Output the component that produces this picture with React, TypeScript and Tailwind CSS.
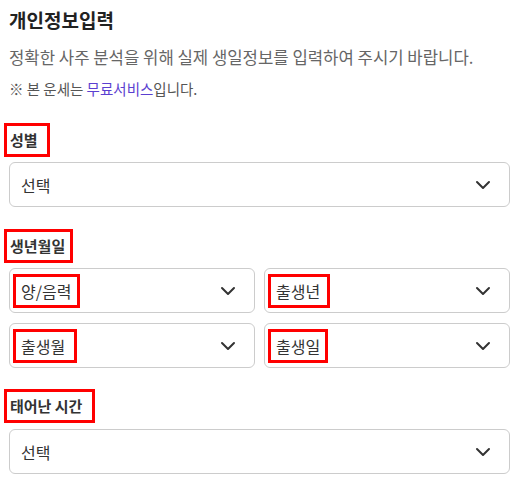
import { ChevronDown } from 'lucide-react'

const font = { fontFamily: '"Noto Sans CJK KR", "Noto Sans", sans-serif' }

function Label({ text, width }: { text: string; width: string }) {
  return (
    <div className={`inline-flex h-[34px] items-center whitespace-nowrap border-[3px] border-[#ff0000] -ml-[5px] pl-[3px] text-[15px] font-bold text-[#333] ${width}`}>
      {text}
    </div>
  )
}

function Select({ text, width }: { text: string; width?: string }) {
  return (
    <div className="flex h-[45px] items-center justify-between rounded-[6px] border border-[#cccccc] bg-white pl-[3px] pr-[14px]">
      {width ? (
        <span className={`inline-flex h-[34px] items-center whitespace-nowrap border-[3px] border-[#ff0000] pl-[5px] text-[16px] text-[#333] ${width}`}>
          {text}
        </span>
      ) : (
        <span className="px-[8px] text-[16px] text-[#333]">{text}</span>
      )}
      <ChevronDown size={24} strokeWidth={2} className="text-[#333]" />
    </div>
  )
}

export default function App() {
  return (
    <div className="min-h-[494px] w-[517px] bg-white" style={font}>
      <div className="ml-[9px] w-[501px] pt-[6px]">
        <h1 className="text-[19px] font-bold leading-[28px] text-[#222]">개인정보입력</h1>
        <p className="mt-[11px] text-[16.7px] leading-[24px] text-[#666]">
          정확한 사주 분석을 위해 실제 생일정보를 입력하여 주시기 바랍니다.
        </p>
        <p className="mt-[10px] text-[14.5px] leading-[20px] text-[#555]">
          ※ 본 운세는 <span className="text-[#5b3fd0]">무료서비스</span>입니다.
        </p>

        <div className="mt-[24px]">
          <Label text="성별" width="w-[46px]" />
        </div>
        <div className="mt-[5px]">
          <Select text="선택" />
        </div>

        <div className="mt-[22px]">
          <Label text="생년월일" width="w-[69px]" />
        </div>
        <div className="mt-[5px] grid grid-cols-2 gap-x-[9px] gap-y-[10px]">
          <Select text="양/음력" width="w-[67px]" />
          <Select text="출생년" width="w-[62px]" />
          <Select text="출생월" width="w-[64px]" />
          <Select text="출생일" width="w-[60px]" />
        </div>

        <div className="mt-[21px]">
          <Label text="태어난 시간" width="w-[91px]" />
        </div>
        <div className="mt-[6px]">
          <Select text="선택" />
        </div>
      </div>
    </div>
  )
}
